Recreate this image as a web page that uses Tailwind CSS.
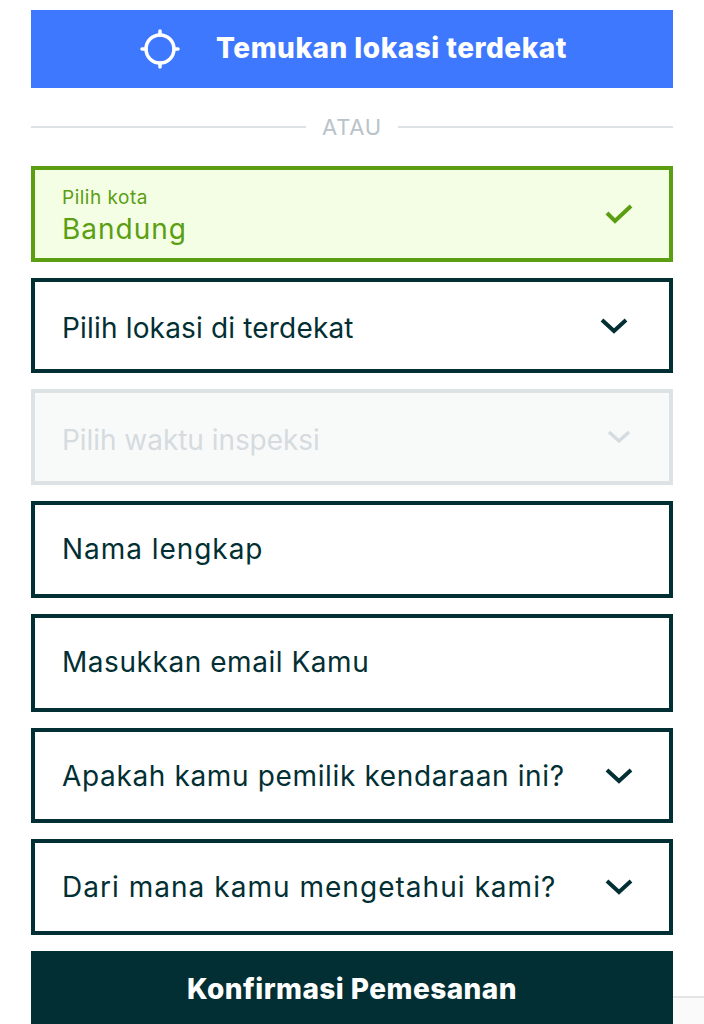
<!DOCTYPE html>
<html lang="en">
<head>
    <meta charset="UTF-8">
    <title>Pemesanan</title>
    <script src="https://cdn.jsdelivr.net/npm/@tailwindcss/browser@4"></script>
</head>
<body class="bg-white h-[1024px] overflow-hidden font-['Inter','Noto_Sans',sans-serif] text-[#022f33]">
    <div class="absolute right-0 top-[996px] w-[31px] h-[28px] bg-[#fafafa] border-t-2 border-[#e4e4e4]"></div>
    <main class="relative mx-[31px] pt-[10px] flex flex-col">
        <button class="h-[78px] bg-[#3d78ff] text-white flex items-center justify-center gap-[36px] pl-[3px] text-[28px] font-extrabold tracking-[0.5px] leading-none">
            <svg class="w-[40px] h-[40px]" viewBox="0 0 40 40" fill="none" stroke="white" stroke-width="3.5" stroke-linecap="round">
                <circle cx="20" cy="20" r="14" />
                <path d="M20 2v4M20 34v4M2 20h4M34 20h4" />
            </svg>
            <span class="mb-[2px]">Temukan lokasi terdekat</span>
        </button>

        <div class="h-[78px] flex items-center gap-[16px] text-[22px] tracking-[0.8px] text-[#b9c3c9]">
            <div class="flex-1 h-[2px] bg-[#dde2e4]"></div>
            <span>ATAU</span>
            <div class="flex-1 h-[2px] bg-[#dde2e4]"></div>
        </div>

        <div class="flex flex-col gap-[16px] text-[28px]">
            <div class="h-[96px] border-[4px] border-[#5b9e12] bg-[#f3fee4] pl-[27px] pr-[36px] flex items-center justify-between text-[#5b9e12]">
                <div class="flex flex-col pt-[6px]">
                    <span class="text-[19px] leading-[24px] tracking-[0.5px]">Pilih kota</span>
                    <span class="leading-[38px] tracking-[1px]">Bandung</span>
                </div>
                <svg class="w-[28px] h-[22px]" viewBox="0 0 28 22" fill="none" stroke="#5b9e12" stroke-width="4">
                    <path d="M2 10l8 8L26 3" />
                </svg>
            </div>

            <div class="h-[95px] border-[4px] border-[#022f33] pl-[27px] pr-[41px] flex items-center justify-between">
                <span class="mt-[4px] tracking-[0.17px]">Pilih lokasi di terdekat</span>
                <svg class="w-[28px] h-[18px]" viewBox="0 0 28 18" fill="none" stroke="#022f33" stroke-width="4">
                    <path d="M2 3l12 11L26 3" />
                </svg>
            </div>

            <div class="h-[96px] border-[4px] border-[#dde2e4] bg-[#f8fafa] pl-[27px] pr-[38px] flex items-center justify-between text-[#d5dbde]">
                <span class="mt-[6px] tracking-[-0.05px]">Pilih waktu inspeksi</span>
                <svg class="w-[24px] h-[16px]" viewBox="0 0 24 16" fill="none" stroke="#d5dbde" stroke-width="3.5">
                    <path d="M2 3l10 9L22 3" />
                </svg>
            </div>

            <div class="h-[97px] border-[4px] border-[#022f33] pl-[27px] pb-[2px] flex items-center tracking-[0.95px]">Nama lengkap</div>
            <div class="h-[98px] border-[4px] border-[#022f33] pl-[27px] pb-[2px] flex items-center tracking-[0.55px]">Masukkan email Kamu</div>

            <div class="h-[95px] border-[4px] border-[#022f33] pl-[27px] pr-[36px] flex items-center justify-between">
                <span class="tracking-[0.64px]">Apakah kamu pemilik kendaraan ini?</span>
                <svg class="w-[28px] h-[18px]" viewBox="0 0 28 18" fill="none" stroke="#022f33" stroke-width="4">
                    <path d="M2 3l12 11L26 3" />
                </svg>
            </div>

            <div class="h-[96px] border-[4px] border-[#022f33] pl-[27px] pr-[36px] flex items-center justify-between">
                <span class="tracking-[1.03px]">Dari mana kamu mengetahui kami?</span>
                <svg class="w-[28px] h-[18px]" viewBox="0 0 28 18" fill="none" stroke="#022f33" stroke-width="4">
                    <path d="M2 3l12 11L26 3" />
                </svg>
            </div>

            <button class="h-[78px] bg-[#022f33] text-white text-[28px] font-extrabold tracking-[0.45px] leading-none pb-[2px]">Konfirmasi Pemesanan</button>
        </div>
    </main>
</body>
</html>
